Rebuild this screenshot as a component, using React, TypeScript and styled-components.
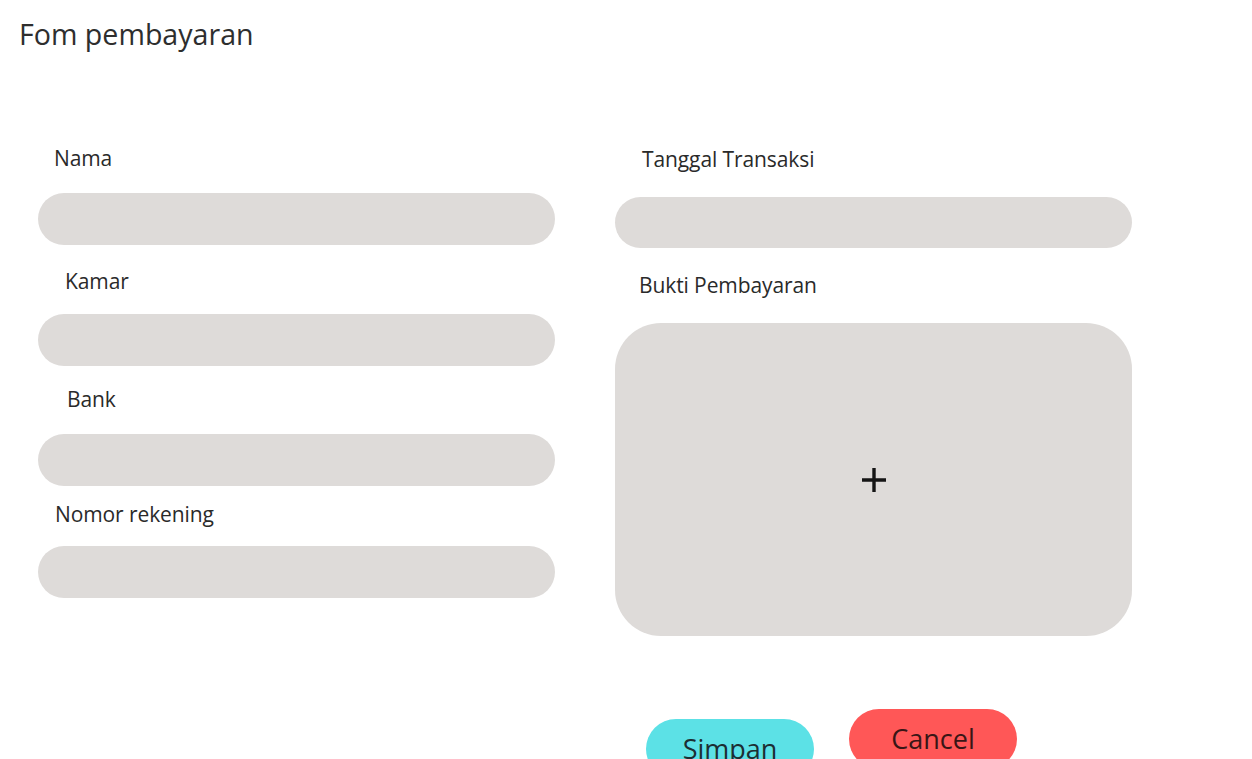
import React from "react";
import styled, { createGlobalStyle } from "styled-components";

const GlobalStyle = createGlobalStyle`
  html, body {
    margin: 0;
    padding: 0;
    background: #ffffff;
    overflow: hidden;
    font-family: "Open Sans", "Noto Sans", sans-serif;
  }
  * { box-sizing: border-box; }
`;

const Page = styled.div`
  width: 1252px;
  height: 759px;
  padding: 16px 0 0 19px;
  overflow: hidden;
`;

const Title = styled.h1`
  margin: 0;
  font-family: "Open Sans", sans-serif;
  font-weight: 400;
  font-size: 28.6px;
  line-height: 36px;
  color: #2e2e2e;
`;

const FormGrid = styled.div`
  display: grid;
  grid-template-columns: 517px 517px;
  column-gap: 60px;
  margin: 93px 0 0 19px;
  align-items: start;
`;

const Column = styled.div`
  display: flex;
  flex-direction: column;
`;

const Label = styled.label<{ $indent: number; $top: number; $gap: number }>`
  display: block;
  font-family: "Open Sans", sans-serif;
  font-size: 21px;
  font-weight: 500;
  line-height: 26px;
  letter-spacing: -0.1px;
  color: #2a2a2a;
  padding-left: ${(p) => p.$indent}px;
  margin-top: ${(p) => p.$top}px;
  margin-bottom: ${(p) => p.$gap}px;
`;

const Input = styled.div<{ $height?: number }>`
  width: 517px;
  height: ${(p) => p.$height ?? 52}px;
  background: #dedbd9;
  border-radius: 26px;
`;

const UploadBox = styled.div`
  width: 517px;
  height: 313px;
  background: #dedbd9;
  border-radius: 46px;
  display: flex;
  align-items: center;
  justify-content: center;
`;

const ButtonRow = styled.div`
  display: flex;
  align-items: flex-start;
  gap: 35px;
  margin: 73px 0 0 627px;
`;

const Button = styled.button<{ $bg: string; $color: string; $offset: number }>`
  width: 168px;
  height: 60px;
  margin-top: ${(p) => p.$offset}px;
  padding: 13px 0 13px;
  border: none;
  border-radius: 30px;
  background: ${(p) => p.$bg};
  color: ${(p) => p.$color};
  font-family: "Open Sans", sans-serif;
  font-size: 27px;
  line-height: 34px;
  text-align: center;
  display: flex;
  justify-content: center;
  align-items: flex-start;
`;

const PlusIcon = () => (
  <svg width="26" height="26" viewBox="0 0 26 26" aria-hidden="true">
    <path d="M13 1 V25 M1 13 H25" stroke="#151515" strokeWidth="3.4" strokeLinecap="butt" />
  </svg>
);

export default function App() {
  return (
    <>
      <GlobalStyle />
      <Page>
        <Title>Fom pembayaran</Title>
        <FormGrid>
          <Column>
            <Label $indent={16} $top={0} $gap={22}>Nama</Label>
            <Input />
            <Label $indent={27} $top={23} $gap={20}>Kamar</Label>
            <Input />
            <Label $indent={29} $top={20} $gap={22}>Bank</Label>
            <Input />
            <Label $indent={17} $top={15} $gap={19}>Nomor rekening</Label>
            <Input />
          </Column>
          <Column>
            <Label $indent={27} $top={1} $gap={25}>Tanggal Transaksi</Label>
            <Input $height={51} />
            <Label $indent={24} $top={24} $gap={25}>Bukti Pembayaran</Label>
            <UploadBox>
              <PlusIcon />
            </UploadBox>
          </Column>
        </FormGrid>
        <ButtonRow>
          <Button $bg="#5ce1e6" $color="#1c2e33" $offset={10}>Simpan</Button>
          <Button $bg="#ff5757" $color="#3a1616" $offset={0}>Cancel</Button>
        </ButtonRow>
      </Page>
    </>
  );
}
